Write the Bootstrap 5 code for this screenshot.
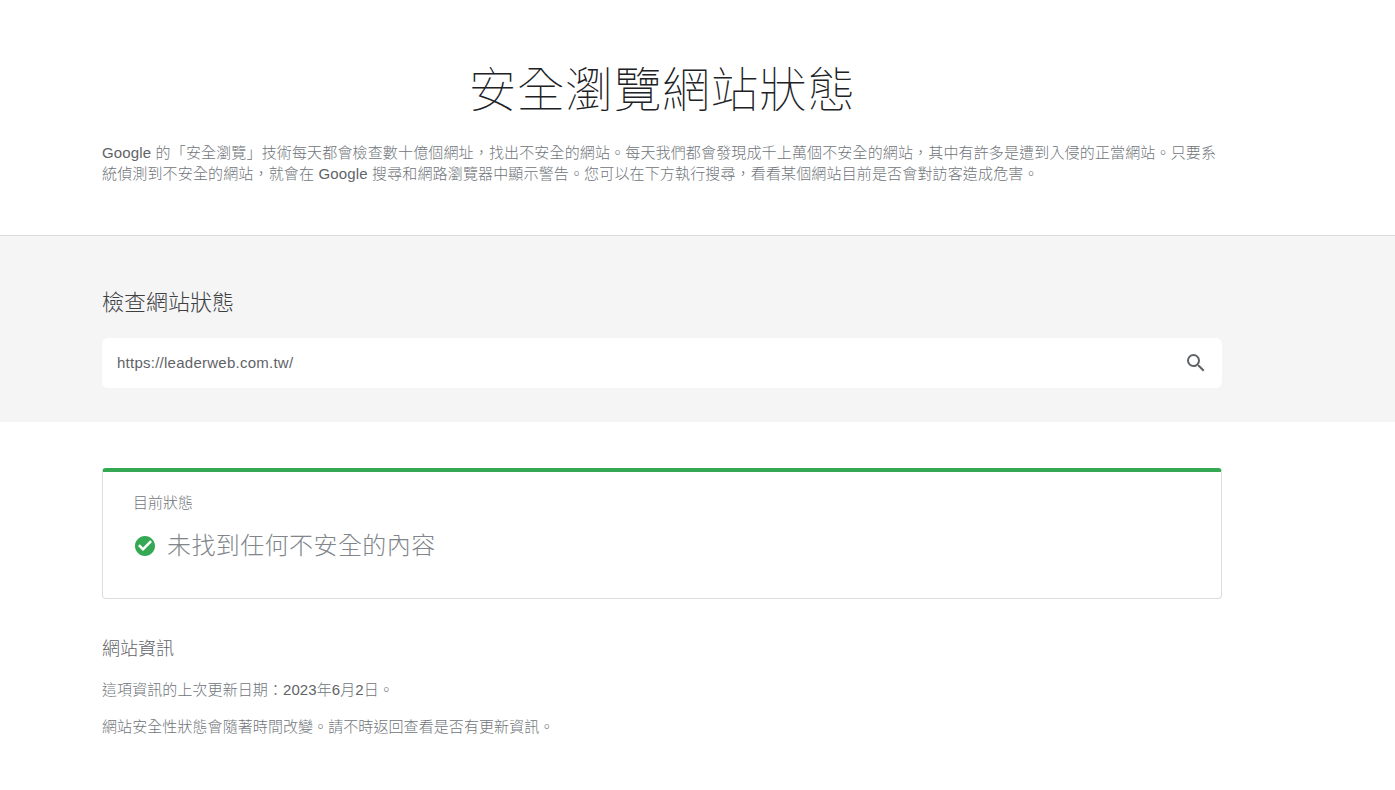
<!DOCTYPE html>
<html lang="zh-TW">
<head>
<meta charset="utf-8">
<title>安全瀏覽網站狀態</title>
<link href="https://cdn.jsdelivr.net/npm/bootstrap@5.3.0/dist/css/bootstrap.min.css" rel="stylesheet">
<style>
body { font-family: "Liberation Sans", "Noto Sans CJK TC", sans-serif; font-size: 15px; font-weight: 300; color: #70757a; background: #fff; overflow: hidden; }
.sb-wrap { width: 1120px; margin-left: 102px; }
.sb-hero { padding-top: 61px; height: 235px; }
.sb-title { font-size: 48px; font-weight: 100; line-height: 60px; color: #202124; margin: 0 0 21px; text-align: center; letter-spacing: .4px; }
.sb-intro { line-height: 21px; margin: 0; letter-spacing: .15px; }
.sb-strong { color: #5f6368; }
.sb-band { background: #f5f5f5; border-top: 1px solid #dadce0; height: 187px; padding-top: 53px; }
.sb-h2 { font-size: 22px; font-weight: 300; line-height: 28px; color: #3c4043; margin: 0 0 21px; }
.sb-search { height: 50px; border-radius: 6px; padding: 0 14px 0 15px; color: #5f6368; }
.sb-url { letter-spacing: .25px; font-weight: 400; }
.sb-status { margin-top: 46px; height: 131px; border: 1px solid #dadce0; border-top: 4px solid #34a853; border-radius: 4px; padding: 21px 30px; }
.sb-label { line-height: 20px; }
.sb-verdict { font-size: 24px; font-weight: 300; line-height: 32px; margin-top: 17px; letter-spacing: .42px; gap: 10px; color: #80868b; }
.sb-h3 { font-size: 18px; font-weight: 300; line-height: 24px; color: #5f6368; margin: 38px 0 0; }
.sb-small { line-height: 20px; margin: 19px 0 0; letter-spacing: .08px; }
.sb-small2 { margin-top: 17px; }
</style>
</head>
<body>
<section class="sb-hero">
  <div class="sb-wrap">
    <h1 class="sb-title">安全瀏覽網站狀態</h1>
    <p class="sb-intro"><span class="sb-strong">Google</span> 的「安全瀏覽」技術每天都會檢查數十億個網址，找出不安全的網站。每天我們都會發現成千上萬個不安全的網站，其中有許多是遭到入侵的正當網站。只要系統偵測到不安全的網站，就會在 <span class="sb-strong">Google</span> 搜尋和網路瀏覽器中顯示警告。您可以在下方執行搜尋，看看某個網站目前是否會對訪客造成危害。</p>
  </div>
</section>
<section class="sb-band">
  <div class="sb-wrap">
    <h2 class="sb-h2">檢查網站狀態</h2>
    <div class="sb-search bg-white d-flex align-items-center justify-content-between">
      <span class="sb-url">https://leaderweb.com.tw/</span>
      <svg width="24" height="24" viewBox="0 0 24 24" fill="#5f6368"><path d="M15.5 14h-.79l-.28-.27A6.471 6.471 0 0 0 16 9.5 6.5 6.5 0 1 0 9.5 16c1.61 0 3.09-.59 4.23-1.57l.27.28v.79l5 4.99L20.49 19l-4.99-5zm-6 0C7.01 14 5 11.99 5 9.5S7.01 5 9.5 5 14 7.01 14 9.5 11.99 14 9.5 14z"/></svg>
    </div>
  </div>
</section>
<main class="sb-wrap">
  <div class="sb-status">
    <div class="sb-label">目前狀態</div>
    <div class="sb-verdict d-flex align-items-center">
      <svg width="24" height="24" viewBox="0 0 24 24" fill="#34a853"><path d="M12 2C6.48 2 2 6.48 2 12s4.48 10 10 10 10-4.48 10-10S17.52 2 12 2zm-2 15-5-5 1.8-1.8 3.2 3.2 7.2-7.2L19 8l-9 9z"/></svg>
      <span>未找到任何不安全的內容</span>
    </div>
  </div>
  <h3 class="sb-h3">網站資訊</h3>
  <p class="sb-small">這項資訊的上次更新日期：<span class="sb-strong">2023</span>年<span class="sb-strong">6</span>月<span class="sb-strong">2</span>日。</p>
  <p class="sb-small sb-small2">網站安全性狀態會隨著時間改變。請不時返回查看是否有更新資訊。</p>
</main>
</body>
</html>
